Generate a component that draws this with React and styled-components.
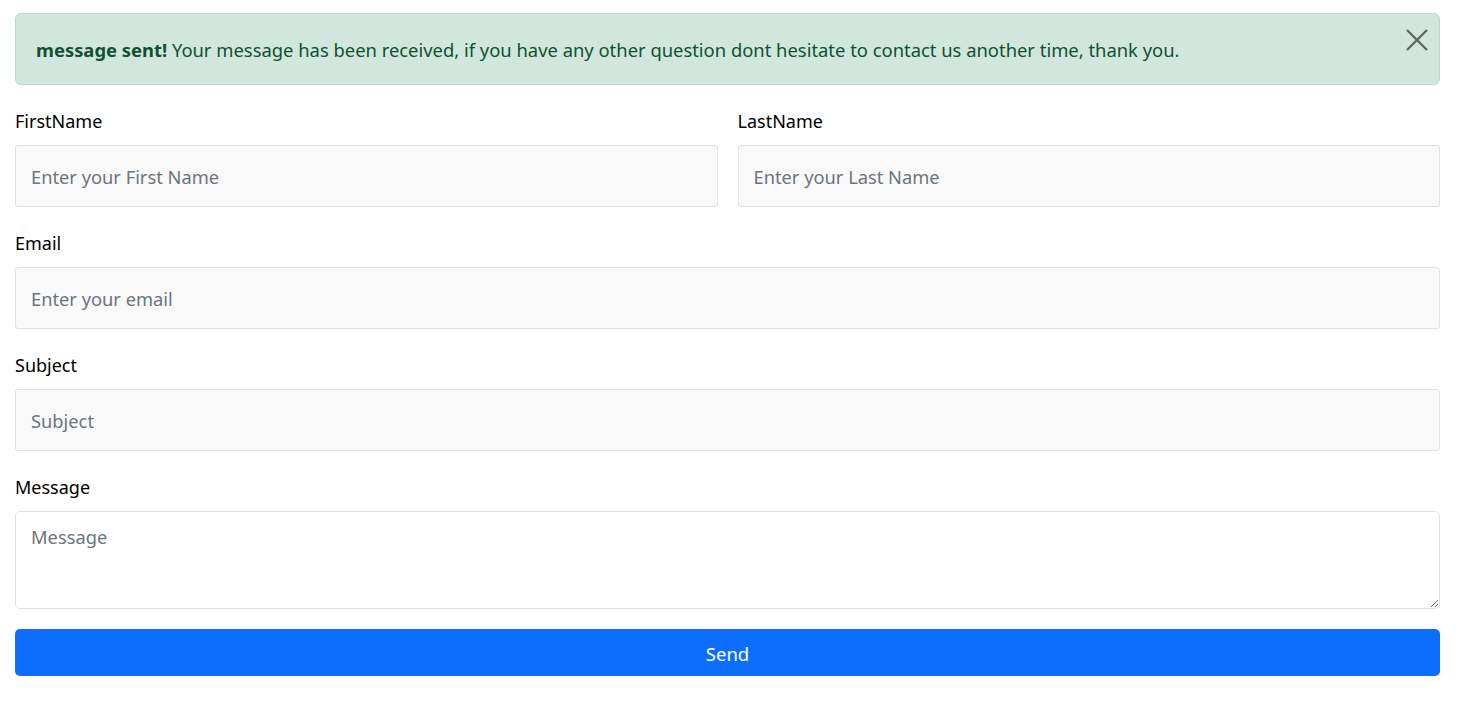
import { useState } from "react";
import styled, { createGlobalStyle } from "styled-components";

const GlobalStyle = createGlobalStyle`
  body {
    margin: 0;
    background: #fff;
    font-family: "Noto Sans", "Open Sans", sans-serif;
    color: #212529;
  }
  * { box-sizing: border-box; }
`;

const Page = styled.div`
  padding: 13px 20px 0 15px;
`;

const Alert = styled.div`
  display: flex;
  align-items: center;
  justify-content: space-between;
  height: 72px;
  padding: 1px 10px 0 20px;
  background: #d1e7dd;
  border: 1px solid #badbcc;
  border-radius: 6px;
  color: #0f5132;
  font-size: 18.4px;
`;

const AlertText = styled.p`
  margin: 0;
  strong { font-weight: 700; }
`;

const CloseButton = styled.button`
  align-self: flex-start;
  margin-top: 13px;
  width: 24px;
  height: 24px;
  padding: 0;
  border: 0;
  background: transparent;
  opacity: 0.55;
  cursor: pointer;
`;

const Form = styled.form`
  display: flex;
  flex-direction: column;
  gap: 22px;
  margin-top: 22px;
`;

const Row = styled.div`
  display: grid;
  grid-template-columns: 1fr 1fr;
  gap: 20px;
`;

const Group = styled.div`
  display: flex;
  flex-direction: column;
  gap: 10px;
`;

const Label = styled.label`
  font-size: 18px;
  line-height: 28px;
  color: #000;
`;

const Input = styled.input`
  height: 62px;
  padding: 0 15px;
  font: inherit;
  font-size: 18.3px;
  background: #f9f9f9;
  border: 1px solid #dee2e6;
  border-radius: 3px;
  color: #212529;
  &::placeholder { color: #6c757d; }
`;

const TextArea = styled.textarea`
  height: 98px;
  padding: 12px 15px;
  font: inherit;
  font-size: 18.3px;
  background: #fff;
  border: 1px solid #dee2e6;
  border-radius: 5px;
  resize: vertical;
  &::placeholder { color: #6c757d; }
`;

const SendButton = styled.button`
  height: 47px;
  margin-top: -2px;
  padding-top: 2px;
  border: 0;
  border-radius: 5px;
  background: #0d6efd;
  color: #fff;
  font: inherit;
  font-size: 18.5px;
  cursor: pointer;
`;

const App = () => {
  const [showAlert, setShowAlert] = useState(true);

  return (
    <Page>
      <GlobalStyle />
      {showAlert && (
        <Alert>
          <AlertText>
            <strong>message sent!</strong> Your message has been received, if you
            have any other question dont hesitate to contact us another time, thank you.
          </AlertText>
          <CloseButton type="button" onClick={() => setShowAlert(false)}>
            <svg width="24" height="24" viewBox="0 0 24 24">
              <path d="M2 2 L22 22 M22 2 L2 22" stroke="#000" strokeWidth="2.4" />
            </svg>
          </CloseButton>
        </Alert>
      )}
      <Form onSubmit={(e) => e.preventDefault()}>
        <Row>
          <Group>
            <Label>FirstName</Label>
            <Input placeholder="Enter your First Name" />
          </Group>
          <Group>
            <Label>LastName</Label>
            <Input placeholder="Enter your Last Name" />
          </Group>
        </Row>
        <Group>
          <Label>Email</Label>
          <Input type="email" placeholder="Enter your email" />
        </Group>
        <Group>
          <Label>Subject</Label>
          <Input placeholder="Subject" />
        </Group>
        <Group>
          <Label>Message</Label>
          <TextArea placeholder="Message" />
        </Group>
        <SendButton type="submit">Send</SendButton>
      </Form>
    </Page>
  );
};

export default App;
